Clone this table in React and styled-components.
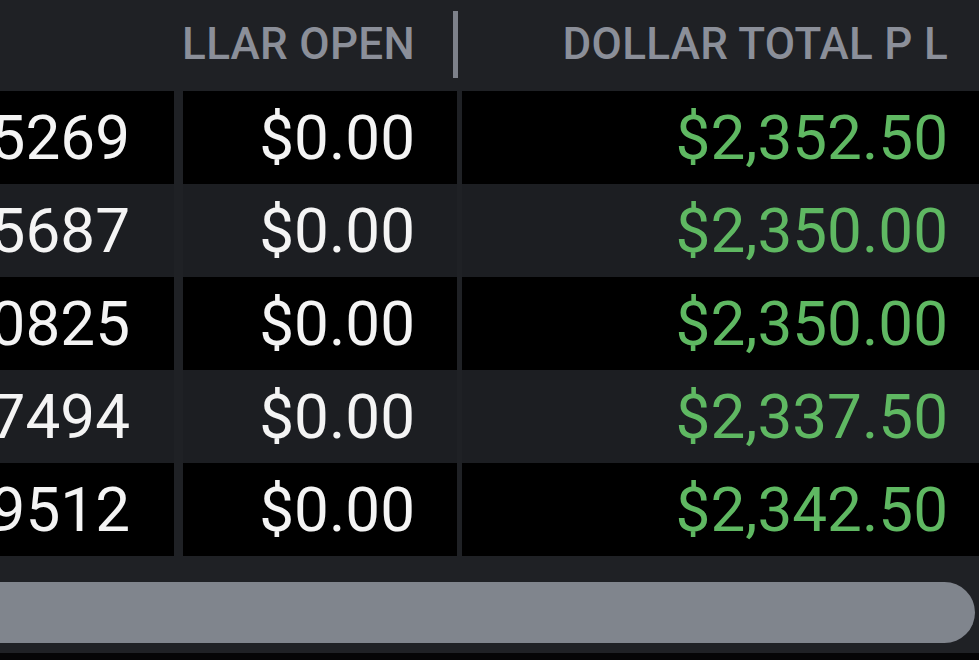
import React from 'react';
import styled, { createGlobalStyle } from 'styled-components';

const GlobalStyle = createGlobalStyle`
  html, body {
    margin: 0;
    padding: 0;
    background: #1f2125;
    overflow: hidden;
  }
  body {
    font-family: Roboto, "Liberation Sans", Arial, sans-serif;
  }
`;

const rows = [
  { id: '1045269', open: '$0.00', total: '$2,352.50' },
  { id: '1045687', open: '$0.00', total: '$2,350.00' },
  { id: '1050825', open: '$0.00', total: '$2,350.00' },
  { id: '1047494', open: '$0.00', total: '$2,337.50' },
  { id: '1049512', open: '$0.00', total: '$2,342.50' },
];

function App() {
  return (
    <>
      <GlobalStyle />
      <Page>
        <Header>
          <HeadCell $w={174} $pr={44} />
          <HeadCell $w={270} $ml={9} $pr={38}>DOLLAR OPEN</HeadCell>
          <HeadDivider />
          <HeadCell $w={521} $pr={31}>DOLLAR TOTAL P L</HeadCell>
        </Header>
        <Body>
          {rows.map((r, i) => (
            <Row key={i}>
              <Cell $w={174} $pr={44} $odd={i % 2 === 0}>{r.id}</Cell>
              <Cell $w={274} $ml={9} $pr={42} $odd={i % 2 === 0}>{r.open}</Cell>
              <Cell $w={517} $ml={5} $pr={31} $odd={i % 2 === 0} $green>{r.total}</Cell>
            </Row>
          ))}
        </Body>
        <ScrollTrack>
          <ScrollThumb />
        </ScrollTrack>
        <BottomEdge />
      </Page>
    </>
  );
}

const Page = styled.div`
  width: 979px;
  height: 660px;
  display: flex;
  flex-direction: column;
  background: #1f2125;
  overflow: hidden;
`;

const Header = styled.div`
  height: 91px;
  display: flex;
  align-items: center;
  padding-bottom: 4px;
  box-sizing: border-box;
`;

const HeadCell = styled.div`
  flex: none;
  width: ${p => p.$w}px;
  margin-left: ${p => p.$ml || 0}px;
  padding-right: ${p => p.$pr}px;
  box-sizing: border-box;
  display: flex;
  justify-content: flex-end;
  overflow: hidden;
  white-space: nowrap;
  font-size: 44px;
  font-weight: 500;
  color: #8b8f99;
  letter-spacing: 0.3px;
`;

const HeadDivider = styled.div`
  flex: none;
  width: 5px;
  height: 67px;
  margin-top: 2px;
  background: #7d818a;
`;

const Body = styled.div`
  display: flex;
  flex-direction: column;
`;

const Row = styled.div`
  display: flex;
  height: 93px;
`;

const Cell = styled.div`
  flex: none;
  width: ${p => p.$w}px;
  margin-left: ${p => p.$ml || 0}px;
  padding-right: ${p => p.$pr}px;
  box-sizing: border-box;
  display: flex;
  align-items: center;
  justify-content: flex-end;
  overflow: hidden;
  white-space: nowrap;
  background: ${p => (p.$odd ? '#000000' : '#1c1e22')};
  color: ${p => (p.$green ? '#5fb862' : '#f4f4f4')};
  font-size: 62px;
  font-weight: 400;
`;

const ScrollTrack = styled.div`
  margin-top: 26px;
  height: 61px;
  padding-right: 4px;
`;

const ScrollThumb = styled.div`
  height: 100%;
  background: #80858d;
  border-radius: 0 31px 31px 0;
`;

const BottomEdge = styled.div`
  margin-top: 10px;
  flex: 1;
  background: #050506;
`;

export default App;
